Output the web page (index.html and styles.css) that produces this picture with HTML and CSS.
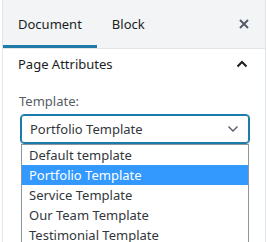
FILE: index.html
```html
<!DOCTYPE html>
<html lang="en">
<head>
    <meta charset="UTF-8">
    <meta name="viewport" content="width=device-width, initial-scale=1.0">
    <title>Page Attributes</title>
    <link rel="stylesheet" href="styles.css">
</head>
<body>
    <div class="sidebar">
        <!-- Tab bar -->
        <div class="sidebar-header">
            <button class="tab active">Document</button>
            <button class="tab">Block</button>
            <button class="close-btn" aria-label="Close">
                <svg width="10" height="10" viewBox="0 0 10 10">
                    <path d="M1 1 L9 9 M9 1 L1 9" stroke="#555d66" stroke-width="2" fill="none"/>
                </svg>
            </button>
        </div>

        <!-- Page attributes panel -->
        <div class="panel">
            <div class="panel-title">
                <span>Page Attributes</span>
                <svg class="toggle" width="12" height="8" viewBox="0 0 12 8">
                    <path d="M1.5 6.5 L6 2 L10.5 6.5" stroke="#191e23" stroke-width="2" fill="none"/>
                </svg>
            </div>
            <div class="panel-body">
                <label class="field-label">Template:</label>
                <div class="select-box">
                    <span>Portfolio Template</span>
                    <svg width="12" height="8" viewBox="0 0 12 8">
                        <path d="M1.5 1.5 L6 6 L10.5 1.5" stroke="#555d66" stroke-width="1.4" fill="none"/>
                    </svg>
                </div>
                <ul class="select-list">
                    <li>Default template</li>
                    <li class="selected">Portfolio Template</li>
                    <li>Service Template</li>
                    <li>Our Team Template</li>
                    <li>Testimonial Template</li>
                </ul>
            </div>
        </div>
    </div>
</body>
</html>
```

FILE: styles.css
```css
body, html {
    margin: 0;
    padding: 0;
    height: 100%;
    font-family: "Noto Sans", "Open Sans", sans-serif;
    font-size: 13px;
    color: #191e23;
    background-color: #fff;
    overflow: hidden;
}
.sidebar {
    margin-left: 2px;
    width: 264px;
    height: 100%;
    box-sizing: border-box;
    border-left: 1px solid #e2e4e7;
    border-right: 1px solid #e2e4e7;
}
.sidebar-header {
    display: flex;
    height: 49px;
    box-sizing: border-box;
    background-color: #f3f4f5;
    border-bottom: 1px solid #e2e4e7;
}
.tab {
    border: none;
    background: none;
    font-family: inherit;
    font-size: 13px;
    color: #191e23;
    padding: 0 15px;
    height: 48px;
    margin: 0;
}
.tab.active {
    box-shadow: inset 0 -3px #1e7aa8;
}
.close-btn {
    margin-left: auto;
    width: 42px;
    height: 48px;
    border: none;
    background: none;
    display: flex;
    align-items: center;
    justify-content: center;
    padding: 0;
}
.panel-title {
    display: flex;
    align-items: center;
    justify-content: space-between;
    height: 30px;
    padding: 0 17px 0 15px;
    font-size: 13px;
}
.panel-body {
    padding: 13px 0 0 16px;
}
.field-label {
    display: block;
    color: #555d66;
    font-size: 13px;
    line-height: 18px;
    margin-bottom: 4px;
}
.select-box {
    width: 230px;
    height: 30px;
    margin-left: 1px;
    box-sizing: border-box;
    border: 1px solid #1e7aa8;
    box-shadow: inset 0 0 0 1px #1e7aa8;
    border-radius: 4px;
    display: flex;
    align-items: center;
    justify-content: space-between;
    padding: 0 10px 0 9px;
    font-size: 13px;
    color: #32373c;
}
.select-list {
    list-style: none;
    margin: 0 0 0 2px;
    padding: 0;
    width: 228px;
    box-sizing: border-box;
    border: 1px solid #8a96a0;
    border-bottom: none;
    font-size: 13px;
    color: #32373c;
}
.select-list li {
    height: 20px;
    line-height: 20px;
    padding-left: 7px;
}
.select-list li.selected {
    background-color: #3399ff;
    color: #fff;
}
```
